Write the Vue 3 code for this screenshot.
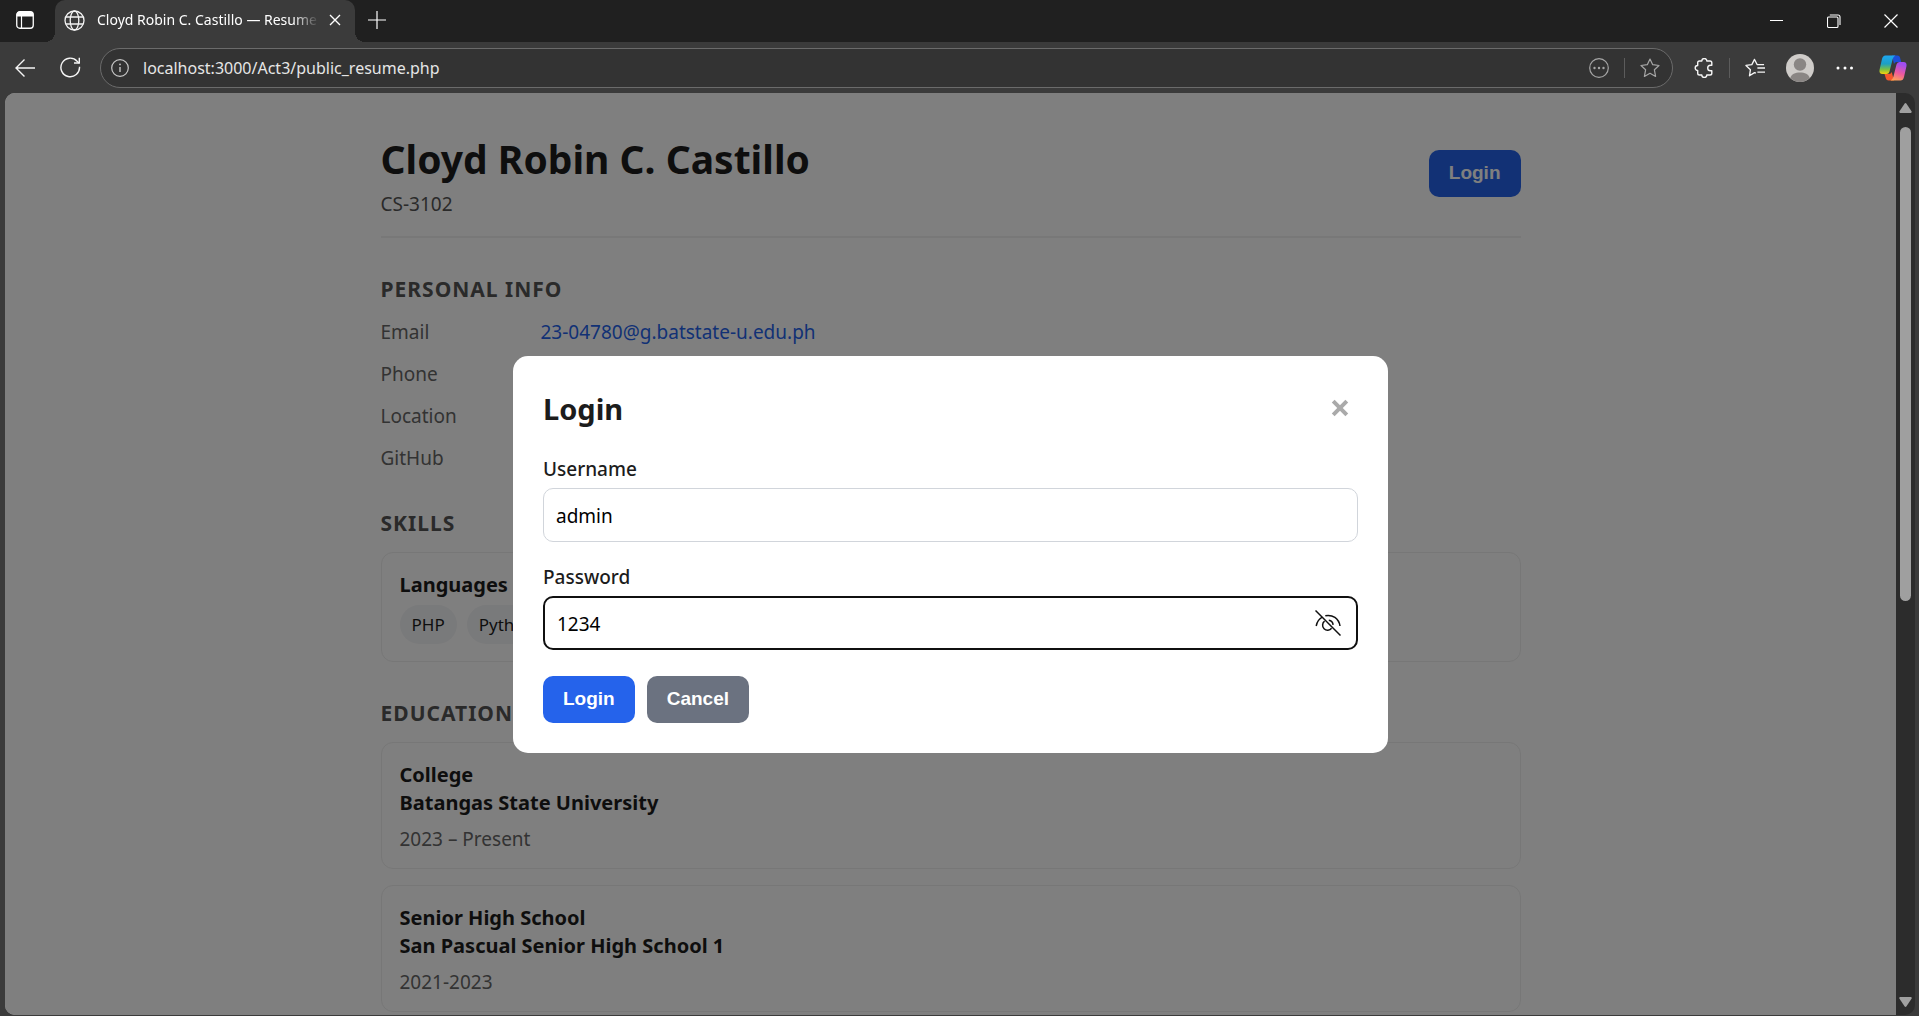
<script setup>
import { ref } from 'vue'

const address = ref('localhost:3000/Act3/public_resume.php')
const username = ref('admin')
const password = ref('1234')

const info = [
  { label: 'Email', value: '23-04780@g.batstate-u.edu.ph', href: 'mailto:23-04780@g.batstate-u.edu.ph' },
  { label: 'Phone' },
  { label: 'Location' },
  { label: 'GitHub' },
]
const languages = ['PHP', 'Python']
const education = [
  { level: 'College', school: 'Batangas State University', years: '2023 – Present' },
  { level: 'Senior High School', school: 'San Pascual Senior High School 1', years: '2021-2023' },
]
</script>

<template>
  <div class="browser">
    <div class="tabstrip">
      <button class="tab-menu" aria-label="Tab actions">
        <svg width="18" height="18" viewBox="0 0 18 18" fill="none" stroke="#fff">
          <rect x="0.75" y="0.75" width="16.5" height="16.5" rx="3" stroke-width="1.3" />
          <path d="M1 5V3.500a2.500 2.500 0 0 1 2.500-2.500h11a2.500 2.500 0 0 1 2.500 2.500V5z" fill="#fff" />
          <path d="M5.500 5v12" stroke-width="1.2" />
        </svg>
      </button>
      <div class="tab">
        <svg width="21" height="21" viewBox="0 0 21 21" fill="none" stroke="#f2f2f2" stroke-width="1.3">
          <circle cx="10.500" cy="10.500" r="9.500" />
          <ellipse cx="10.500" cy="10.500" rx="4.300" ry="9.500" />
          <path d="M1.800 7h17.400M1.800 14h17.400" />
        </svg>
        <span class="tab-title">Cloyd Robin C. Castillo — Resume</span>
        <button class="tab-close" aria-label="Close tab">
          <svg width="12" height="12" viewBox="0 0 12 12" stroke="#fff" stroke-width="1.4"><path d="M1 1l10 10M11 1L1 11" /></svg>
        </button>
      </div>
      <button class="new-tab" aria-label="New tab">
        <svg width="18" height="18" viewBox="0 0 18 18" stroke="#fff" stroke-width="1.2"><path d="M9 0v18M0 9h18" /></svg>
      </button>
      <div class="window-controls">
        <button aria-label="Minimize">
          <svg width="14" height="14" viewBox="0 0 14 14" stroke="#fff"><path d="M0 6.500h13" /></svg>
        </button>
        <button aria-label="Restore">
          <svg width="14" height="14" viewBox="0 0 14 14" fill="none" stroke="#fff" stroke-width="1.100">
            <rect x="0.500" y="3" width="10.500" height="10.500" rx="1.200" />
            <path d="M2.800 1h8.200a2 2 0 0 1 2 2v8" />
          </svg>
        </button>
        <button aria-label="Close">
          <svg width="14" height="14" viewBox="0 0 14 14" stroke="#fff" stroke-width="1.200"><path d="M0.500 0.500l13 13M13.500 0.500l-13 13" /></svg>
        </button>
      </div>
    </div>

    <div class="toolbar">
      <button class="nav" aria-label="Back">
        <svg width="20" height="18" viewBox="0 0 20 18" fill="none" stroke="#f5f5f5" stroke-width="1.400"><path d="M20 9H1M9.500 0.500L1 9l8.500 8.500" /></svg>
      </button>
      <button class="nav reload" aria-label="Refresh">
        <svg width="21" height="21" viewBox="0 0 21 21" fill="none" stroke="#f5f5f5" stroke-width="1.400">
          <path d="M19.500 9.800a9.300 9.300 0 1 1-2.400-5.600L19 6" />
          <path d="M19.300 0.800V6h-5.300" />
        </svg>
      </button>
      <div class="address">
        <svg width="18" height="18" viewBox="0 0 18 18" fill="none" stroke="#c8c8c8" stroke-width="1.200">
          <circle cx="9" cy="9" r="8.300" />
          <path d="M9 8v5" stroke-width="1.400" />
          <circle cx="9" cy="5.400" r="0.900" fill="#c8c8c8" stroke="none" />
        </svg>
        <input v-model="address" type="text" aria-label="Address" spellcheck="false" />
        <button aria-label="Page options">
          <svg width="20" height="20" viewBox="0 0 20 20" fill="none" stroke="#a6a6a6" stroke-width="1.200">
            <circle cx="10" cy="10" r="9.300" />
            <g fill="#a6a6a6" stroke="none"><circle cx="5.500" cy="10" r="1.200" /><circle cx="10" cy="10" r="1.200" /><circle cx="14.500" cy="10" r="1.200" /></g>
          </svg>
        </button>
        <span class="divider"></span>
        <button aria-label="Add to favorites">
          <svg width="20" height="20" viewBox="0 0 20 20" fill="none" stroke="#a6a6a6" stroke-width="1.200" stroke-linejoin="round">
            <path d="M10 1l2.700 5.700 6.300.8-4.600 4.300 1.200 6.600L10 15.300l-5.600 3.100 1.200-6.600L1 7.500l6.300-.8z" />
          </svg>
        </button>
      </div>
      <button class="extensions" aria-label="Extensions">
        <svg width="20" height="20" viewBox="0 0 20 20" fill="none" stroke="#f5f5f5" stroke-width="1.400" stroke-linejoin="round">
          <path d="M5.500 3h2.300a2.500 2.500 0 0 1 5 0h3.200q1.800 0 1.800 1.800v2.400h-1.300a2.800 2.800 0 0 0 0 5.600h1.300v2.400q0 1.800-1.800 1.800h-3.200a2.500 2.500 0 0 1-5 0H5.500q-1.800 0-1.800-1.800v-2.700a2.500 2.500 0 0 1 0-5V4.800Q3.700 3 5.500 3z" />
        </svg>
      </button>
      <span class="divider"></span>
      <button class="favorites" aria-label="Favorites">
        <svg width="20" height="20" viewBox="0 0 21 20" fill="none" stroke="#f5f5f5" stroke-width="1.400" stroke-linejoin="round">
          <path d="M11.500 15.300L10 14.800l-5.300 3.400 1-6.400L1 7.300l6.200-.9L10 1l2.700 5.400h7.300" />
          <path d="M13 10h8M13 14.300h8" />
        </svg>
      </button>
      <button class="avatar" aria-label="Profile">
        <svg width="28" height="28" viewBox="0 0 28 28">
          <circle cx="14" cy="14" r="14" fill="#cfccc9" />
          <circle cx="14" cy="10.500" r="6.200" fill="#8a8684" />
          <path d="M4.300 24c1-4.200 5-5.600 9.700-5.600s8.700 1.400 9.700 5.600A14 14 0 0 1 14 28 14 14 0 0 1 4.300 24z" fill="#8a8684" />
        </svg>
      </button>
      <button class="more" aria-label="Settings and more">
        <svg width="18" height="4" viewBox="0 0 18 4" fill="#fff"><circle cx="2" cy="2" r="1.500" /><circle cx="9" cy="2" r="1.500" /><circle cx="15.500" cy="2" r="1.500" /></svg>
      </button>
      <button class="copilot" aria-label="Copilot">
        <svg width="28" height="26" viewBox="0 0 28 26">
          <defs>
            <linearGradient id="cpLeft" x1="0" y1="0" x2="0" y2="1"><stop offset="0" stop-color="#1ea7f2" /><stop offset="0.450" stop-color="#1c9fc4" /><stop offset="0.750" stop-color="#7ac043" /><stop offset="1" stop-color="#f5d20c" /></linearGradient>
            <linearGradient id="cpRight" x1="0.300" y1="0" x2="0" y2="1"><stop offset="0" stop-color="#a04df0" /><stop offset="0.500" stop-color="#ee5a9c" /><stop offset="1" stop-color="#ffb04a" /></linearGradient>
          </defs>
          <path d="M13 0.500h5.500q2 0 2.500 2l1.200 4.500h-4.500q-2 0-2.700 2z" fill="#1c4fd8" />
          <path d="M15 25.500H9.500q-2 0-2.600-2L5.500 19H10q2 0 2.700-2z" fill="#f4572c" />
          <path d="M6.500 0.500h10Q14.500 1 13.700 4L10.500 16.500Q9.800 19 7.500 19H3.500Q0 19 0.500 15L3 4Q3.800 0.500 6.500 0.500z" fill="url(#cpLeft)" />
          <path d="M21.500 25.500h-10q2-0.500 2.800-3.500L17.500 9.500Q18.200 7 20.500 7h4Q28 7 27.500 11L25 22q-0.800 3.500-3.500 3.500z" fill="url(#cpRight)" />
        </svg>
      </button>
    </div>

    <div class="viewport">
      <div class="page">
        <main class="resume">
          <header class="resume-header">
            <div>
              <h1>Cloyd Robin C. Castillo</h1>
              <p class="muted">CS-3102</p>
            </div>
            <button class="btn primary">Login</button>
          </header>

          <section>
            <h2>PERSONAL INFO</h2>
            <dl class="info">
              <div v-for="row in info" :key="row.label">
                <dt>{{ row.label }}</dt>
                <dd><a v-if="row.href" :href="row.href">{{ row.value }}</a></dd>
              </div>
            </dl>
          </section>

          <section>
            <h2>SKILLS</h2>
            <div class="card">
              <h3>Languages</h3>
              <ul class="chips">
                <li v-for="language in languages" :key="language">{{ language }}</li>
              </ul>
            </div>
          </section>

          <section>
            <h2>EDUCATION</h2>
            <div class="cards">
              <article v-for="item in education" :key="item.level" class="card">
                <h3>{{ item.level }}</h3>
                <h3>{{ item.school }}</h3>
                <p class="years">{{ item.years }}</p>
              </article>
            </div>
          </section>
        </main>

        <div class="overlay">
          <form class="modal" role="dialog" aria-labelledby="login-title" @submit.prevent>
            <div class="modal-head">
              <h2 id="login-title">Login</h2>
              <button type="button" class="modal-close" aria-label="Close">
                <svg width="18" height="18" viewBox="0 0 18 18" stroke="#aaa" stroke-width="4"><path d="M2.200 2.200l13.600 13.600M15.800 2.200L2.200 15.800" /></svg>
              </button>
            </div>
            <div class="field">
              <label for="username">Username</label>
              <input id="username" v-model="username" type="text" spellcheck="false" />
            </div>
            <div class="field">
              <label for="password">Password</label>
              <div class="password">
                <input id="password" v-model="password" type="text" />
                <button type="button" class="reveal" aria-label="Hide password">
                  <svg width="26" height="26" viewBox="0 0 26 26" fill="none" stroke="#111" stroke-width="1.500">
                    <path d="M0.500 0.500l25 25" />
                    <path d="M1.200 16C2 12 4 9 7.200 7.200" />
                    <path d="M10.300 5.700C17.500 4.200 23.800 8.500 25 16" />
                    <path d="M9.600 11.200a5 5 0 1 0 7 7" />
                    <path d="M13.800 10.300a5 5 0 0 1 4.300 4.600" />
                  </svg>
                </button>
              </div>
            </div>
            <div class="actions">
              <button type="submit" class="btn primary">Login</button>
              <button type="button" class="btn secondary">Cancel</button>
            </div>
          </form>
        </div>
      </div>

      <div class="scrollbar" aria-hidden="true">
        <svg width="13" height="10" viewBox="0 0 13 10" fill="#a0a0a0"><path d="M5.500 0.700q1-1.200 2 0l5 7.500q.8 1.500-.8 1.800H1.300Q-.300 9.700.5 8.200z" /></svg>
        <div class="track"><div class="thumb"></div></div>
        <svg width="13" height="10" viewBox="0 0 13 10" fill="#a0a0a0"><path d="M5.500 9.300q1 1.200 2 0l5-7.500Q13.300.3 11.700 0H1.300Q-.300.3.5 1.800z" /></svg>
      </div>
    </div>
  </div>
</template>

<style>
body {
  margin: 0;
}
</style>

<style scoped>
.browser,
.browser * {
  box-sizing: border-box;
}

.browser {
  display: flex;
  flex-direction: column;
  height: 100vh;
  overflow: hidden;
  background: #3b3b3b;
  font-family: "Noto Sans", "Open Sans", sans-serif;
}

button {
  display: flex;
  align-items: center;
  justify-content: center;
  flex: none;
  margin: 0;
  padding: 0;
  border: 0;
  background: none;
}

h1, h2, h3, p, dl, dd, ul {
  margin: 0;
  padding: 0;
}

.tabstrip {
  display: flex;
  flex: none;
  height: 42px;
  background: #202020;
}

.tab-menu {
  width: 50px;
  height: 40px;
  margin-right: 5px;
}

.tab {
  position: relative;
  display: flex;
  align-items: center;
  width: 300px;
  padding: 0 12px 2px 9px;
  border-radius: 10px 10px 0 0;
  background: #3b3b3b;
}

.tab::before,
.tab::after {
  content: "";
  position: absolute;
  bottom: 0;
  width: 10px;
  height: 10px;
}

.tab::before {
  right: 100%;
  background: radial-gradient(circle at 0 0, #202020 10px, #3b3b3b 10px);
}

.tab::after {
  left: 100%;
  background: radial-gradient(circle at 100% 0, #202020 10px, #3b3b3b 10px);
}

.tab-title {
  flex: 1;
  margin-left: 12px;
  overflow: hidden;
  color: #fff;
  font-size: 14px;
  line-height: 20px;
  white-space: nowrap;
  mask-image: linear-gradient(to right, #000 88%, transparent);
}

.tab-close {
  width: 16px;
  height: 16px;
  margin-left: 8px;
}

.new-tab {
  width: 44px;
  height: 40px;
}

.window-controls {
  display: flex;
  margin-left: auto;
}

.window-controls button {
  width: 57px;
  height: 42px;
}

.toolbar {
  display: flex;
  flex: none;
  align-items: center;
  height: 51px;
}

.nav {
  width: 50px;
  height: 40px;
}

.reload {
  width: 40px;
  margin-right: 10px;
}

.address {
  display: flex;
  flex: 1;
  align-items: center;
  height: 40px;
  padding: 0 12px 0 10px;
  border: 1px solid #6b6b6b;
  border-radius: 20px;
  background: #333;
}

.address input {
  flex: 1;
  min-width: 0;
  margin-left: 14px;
  padding: 0;
  border: 0;
  outline: 0;
  background: none;
  color: #e6e6e6;
  font-family: inherit;
  font-size: 16px;
  line-height: 24px;
}

.divider {
  flex: none;
  width: 1px;
  height: 20px;
  margin: 0 15px;
  background: #5c5c5c;
}

.extensions {
  margin-left: 21px;
}

.avatar {
  margin-left: 21px;
}

.more {
  margin-left: 22px;
}

.copilot {
  margin: 0 12px 0 25px;
}

.viewport {
  display: flex;
  flex: 1;
  min-height: 0;
  margin: 0 4px 1px 5px;
  overflow: hidden;
  border-radius: 10px;
}

.page {
  position: relative;
  flex: 1;
  overflow: hidden;
  background: #fff;
}

.resume {
  max-width: 1200px;
  margin: 0 auto;
  padding: 38px 30px;
  color: #1c1c1c;
  font-size: 19px;
  line-height: 28px;
}

.resume-header {
  display: flex;
  align-items: center;
  justify-content: space-between;
  padding-bottom: 20px;
  border-bottom: 2px solid #f0f0f0;
}

h1 {
  margin-bottom: 5px;
  font-size: 39px;
  line-height: 56px;
}

.muted {
  color: #555;
  line-height: 24px;
}

section {
  margin-top: 36px;
}

section h2 {
  margin-bottom: 14px;
  color: #555;
  font-size: 21px;
  line-height: 30px;
  letter-spacing: 1px;
}

.info {
  display: flex;
  flex-direction: column;
  gap: 14px;
}

.info > div {
  display: grid;
  grid-template-columns: 160px 1fr;
}

.info dt {
  color: #666;
}

.info a {
  color: #2563eb;
  text-decoration: none;
}

.cards {
  display: flex;
  flex-direction: column;
  gap: 16px;
}

.card {
  padding: 18px 18px 15px;
  border: 1px solid #eee;
  border-radius: 12px;
}

.card h3 {
  font-size: 20px;
  line-height: 28px;
}

.chips {
  display: flex;
  gap: 10px;
  margin: 6px 0 2px;
  list-style: none;
}

.chips li {
  padding: 0 12px;
  border-radius: 20px;
  background: #f3f4f6;
  font-size: 17px;
  line-height: 39px;
}

.years {
  margin-top: 8px;
  color: #666;
}

.overlay {
  position: absolute;
  inset: 0;
  display: flex;
  align-items: center;
  justify-content: center;
  background: rgba(0, 0, 0, 0.5);
}

.modal {
  width: 100%;
  max-width: 875px;
  padding: 30px;
  border-radius: 15px;
  background: #fff;
  color: #1c1c1c;
}

.modal-head {
  display: flex;
  justify-content: space-between;
  margin-bottom: 2px;
}

.modal-head h2 {
  font-size: 29px;
  line-height: 46px;
}

.modal-close {
  width: 36px;
  height: 44px;
}

.field {
  padding-top: 21px;
}

.field label {
  display: block;
  margin-bottom: 5px;
  font-size: 19px;
  font-weight: 500;
  line-height: 28px;
}

.field input {
  display: block;
  width: 100%;
  height: 54px;
  padding: 2px 12px 0;
  border: 1px solid #d1d5db;
  border-radius: 10px;
  outline: 0;
  background: #fff;
  color: #000;
  font-family: inherit;
  font-size: 19px;
}

.password {
  position: relative;
}

.password input {
  padding: 2px 60px 0 12px;
  border: 2px solid #101010;
}

.reveal {
  position: absolute;
  top: 14px;
  right: 17px;
}

.actions {
  display: flex;
  gap: 12px;
  margin-top: 26px;
}

.btn {
  padding: 0 20px 2px;
  border-radius: 10px;
  color: #fff;
  font-family: "Liberation Sans", Arial, sans-serif;
  font-size: 19px;
  font-weight: 700;
  line-height: 45px;
}

.primary {
  background: #2563eb;
}

.secondary {
  background: #6b7280;
}

.scrollbar {
  display: flex;
  flex: none;
  flex-direction: column;
  align-items: center;
  width: 19px;
  padding: 10px 0 8px;
  background: #2c2c2c;
}

.track {
  flex: 1;
  width: 11px;
  margin: 14px 0 8px;
}

.thumb {
  height: 55%;
  border-radius: 6px;
  background: #9f9f9f;
}
</style>
